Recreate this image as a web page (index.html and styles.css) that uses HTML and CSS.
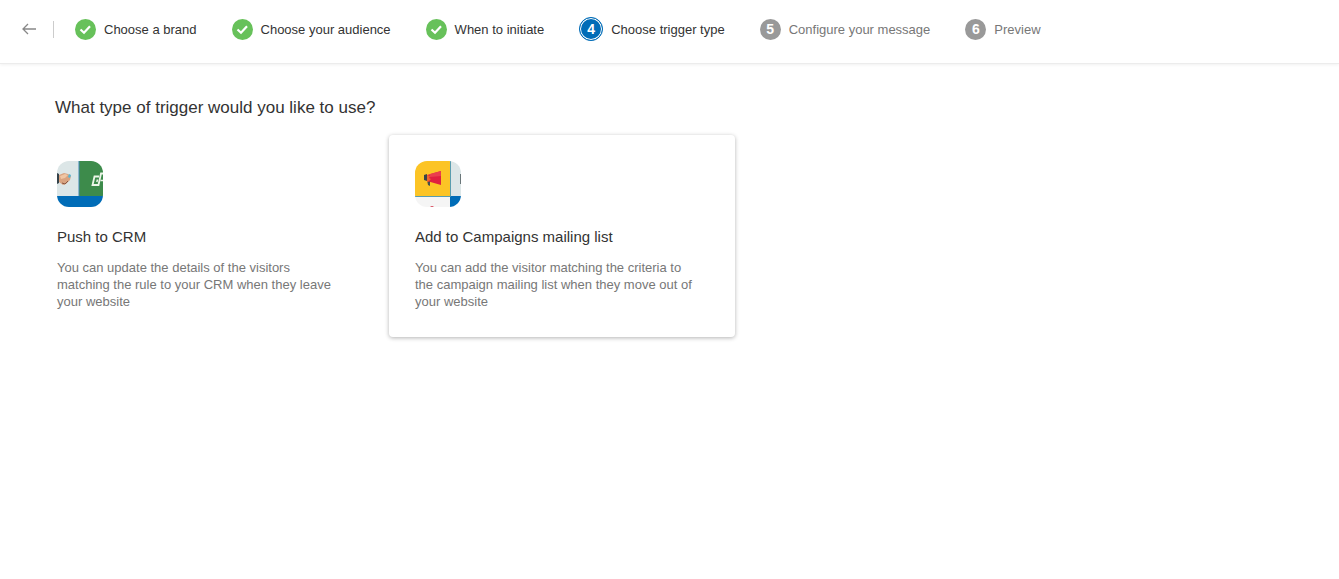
FILE: index.html
```html
<!DOCTYPE html>
<html lang="en">
<head>
    <meta charset="UTF-8">
    <meta name="viewport" content="width=device-width, initial-scale=1.0">
    <title>Choose trigger type</title>
    <link rel="stylesheet" href="styles.css">
</head>
<body>
    <header class="topbar">
        <button type="button" class="back" aria-label="Back">
            <svg width="14" height="12" viewBox="0 0 14 12"><path d="M14 6H1M6 1L1 6l5 5" fill="none" stroke="#888" stroke-width="1.3"/></svg>
        </button>
        <ol class="steps">
            <li class="step">
                <span class="badge done"><svg width="21" height="21" viewBox="0 0 21 21"><path d="M5.5 10.5l3.5 3.3 6-6.6" fill="none" stroke="#fff" stroke-width="2.2"/></svg></span>
                <span>Choose a brand</span>
            </li>
            <li class="step">
                <span class="badge done"><svg width="21" height="21" viewBox="0 0 21 21"><path d="M5.5 10.5l3.5 3.3 6-6.6" fill="none" stroke="#fff" stroke-width="2.2"/></svg></span>
                <span>Choose your audience</span>
            </li>
            <li class="step">
                <span class="badge done"><svg width="21" height="21" viewBox="0 0 21 21"><path d="M5.5 10.5l3.5 3.3 6-6.6" fill="none" stroke="#fff" stroke-width="2.2"/></svg></span>
                <span>When to initiate</span>
            </li>
            <li class="step current" aria-current="step">
                <span class="badge">4</span>
                <span>Choose trigger type</span>
            </li>
            <li class="step pending">
                <span class="badge">5</span>
                <span>Configure your message</span>
            </li>
            <li class="step pending">
                <span class="badge">6</span>
                <span>Preview</span>
            </li>
        </ol>
    </header>

    <main class="content">
        <h1>What type of trigger would you like to use?</h1>
        <div class="cards">
            <button type="button" class="card">
                <svg class="card-icon" width="46" height="46" viewBox="0 0 46 46" aria-hidden="true">
                    <rect width="22" height="35" fill="#dce6e7"/>
                    <rect x="22" width="24" height="35" fill="#3d8b4b"/>
                    <path d="M22 0v35" stroke="#3f86b4"/>
                    <rect y="35" width="46" height="11" fill="#006cb7"/>
                    <!-- handshake -->
                    <path d="M0 12l2 1v9l-2 1z" fill="#33424a"/>
                    <path d="M2 14l5-2 4 1 3 2-1 4-4 4-3 1-4-3z" fill="#d9a380"/>
                    <path d="M3 15l5-2 3 1-3 3-4 1z" fill="#f0c6a4"/>
                    <path d="M5 22l3 1 3-3" stroke="#895642" fill="none"/>
                    <path d="M12 13l2 1-1 3-2-1z" fill="#59b6d4"/>
                    <!-- crm mark -->
                    <path d="M42 15.500h-4.500l-2 8.500h6l2.500-11.500h2" fill="none" stroke="#edf6e9" stroke-width="1.8"/>
                    <path d="M40.500 18.500l-.7 2.500M43.500 19.500h3" stroke="#edf6e9" stroke-width="1.5"/>
                </svg>
                <span class="card-title">Push to CRM</span>
                <span class="card-text">You can update the details of the visitors matching the rule to your CRM when they leave your website</span>
            </button>
            <button type="button" class="card selected">
                <svg class="card-icon" width="46" height="46" viewBox="0 0 46 46" aria-hidden="true">
                    <rect width="35" height="35" fill="#fcc425"/>
                    <rect x="35" width="11" height="35" fill="#dce6e7"/>
                    <rect y="35" width="35" height="11" fill="#f5f5f5"/>
                    <rect x="35" y="35" width="11" height="11" fill="#006cb7"/>
                    <path d="M35.5 0v35.5H0" fill="none" stroke="#5a9daf"/>
                    <!-- megaphone -->
                    <path d="M12 19h3v6l-2-1z" fill="#44504d"/>
                    <path d="M9 14l3-1v7l-3-1z" fill="#394348"/>
                    <path d="M12 14l14-4v14l-14-4z" fill="#e0203f"/>
                    <path d="M15 13l11-3v5l-11 1z" fill="#ea3f4d"/>
                    <path d="M12 14l3 1-1 2 2 1-3 3h-1z" fill="#ef642b"/>
                    <path d="M45.500 13v10" stroke="#6a7679"/>
                    <path d="M15 46q2-2 4 0z" fill="#d84a5c"/>
                </svg>
                <span class="card-title">Add to Campaigns mailing list</span>
                <span class="card-text">You can add the visitor matching the criteria to the campaign mailing list when they move out of your website</span>
            </button>
        </div>
    </main>
</body>
</html>
```

FILE: styles.css
```css
* {
    box-sizing: border-box;
}
body {
    margin: 0;
    font-family: "Liberation Sans", Arial, sans-serif;
    font-size: 13px;
    color: #333;
    background-color: #fff;
}
button {
    font: inherit;
    color: inherit;
    cursor: pointer;
}
.topbar {
    display: flex;
    align-items: center;
    height: 64px;
    padding: 0 22px 5px;
    border-bottom: 1px solid #ececec;
    box-shadow: 0 1px 3px rgba(0,0,0,0.06);
}
.back {
    display: flex;
    align-items: center;
    height: 17px;
    padding: 0 17px 0 0;
    background: none;
    border: none;
    border-right: 1px solid #ccc;
}
.steps {
    display: flex;
    gap: 35px;
    margin: 0;
    padding: 0 0 0 21px;
    list-style: none;
}
.step {
    display: flex;
    align-items: center;
    gap: 8px;
    white-space: nowrap;
}
.badge {
    display: flex;
    align-items: center;
    justify-content: center;
    width: 21px;
    height: 21px;
    border-radius: 50%;
    background-color: #999;
    color: #fff;
    font-size: 14px;
    font-weight: bold;
}
.badge.done {
    background-color: #67c15a;
}
.current .badge {
    width: 24px;
    height: 24px;
    background-color: #006cb7;
    border: 1px solid #006cb7;
    box-shadow: inset 0 0 0 1px #fff;
}
.pending {
    color: #777;
}
.content {
    padding: 32px 31px;
}
h1 {
    margin: 0 0 16px 24px;
    font-size: 17px;
    line-height: 23px;
    font-weight: normal;
}
.cards {
    display: flex;
    flex-wrap: wrap;
    gap: 12px;
}
.card {
    display: flex;
    flex-direction: column;
    align-items: flex-start;
    width: 346px;
    padding: 26px 36px 27px 26px;
    text-align: left;
    background: #fff;
    border: none;
    border-radius: 4px;
}
.card.selected {
    box-shadow: 0 1px 4px rgba(0,0,0,0.3);
}
.card-icon {
    border-radius: 12px;
}
.card-title {
    margin: 20px 0 12px;
    font-size: 15px;
    line-height: 20px;
}
.card-text {
    line-height: 17px;
    color: #777;
}
```
